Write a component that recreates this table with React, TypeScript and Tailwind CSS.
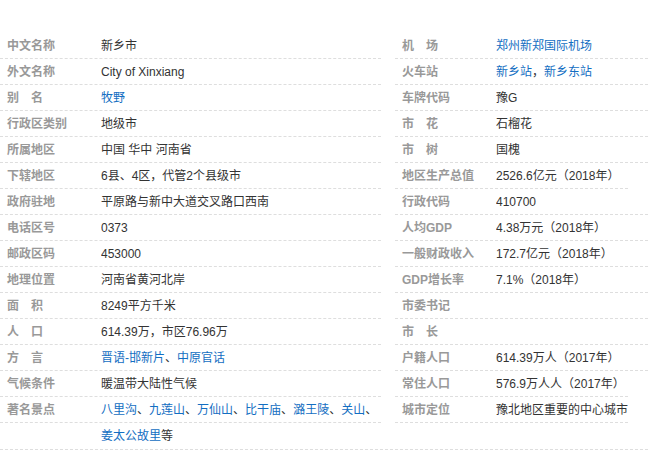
import React from 'react'

type Part = { text: string; link?: boolean }
type Item = { label: string; value: Part[]; short?: boolean; last?: boolean }

const t = (text: string): Part => ({ text })
const a = (text: string): Part => ({ text, link: true })

const leftItems: Item[] = [
  { label: '中文名称', value: [t('新乡市')] },
  { label: '外文名称', value: [t('City of Xinxiang')] },
  { label: '别　名', value: [a('牧野')] },
  { label: '行政区类别', value: [t('地级市')] },
  { label: '所属地区', value: [t('中国 华中 河南省')] },
  { label: '下辖地区', value: [t('6县、4区，代管2个县级市')] },
  { label: '政府驻地', value: [t('平原路与新中大道交叉路口西南')] },
  { label: '电话区号', value: [t('0373')] },
  { label: '邮政区码', value: [t('453000')] },
  { label: '地理位置', value: [t('河南省黄河北岸')] },
  { label: '面　积', value: [t('8249平方千米')] },
  { label: '人　口', value: [t('614.39万，市区76.96万')] },
  { label: '方　言', value: [a('晋语-邯新片'), t('、'), a('中原官话')] },
  { label: '气候条件', value: [t('暖温带大陆性气候')] },
  {
    label: '著名景点',
    value: [
      a('八里沟'), t('、'), a('九莲山'), t('、'), a('万仙山'), t('、'),
      a('比干庙'), t('、'), a('潞王陵'), t('、'), a('关山'), t('、'),
    ],
  },
  { label: '', value: [a('姜太公故里'), t('等')], last: true },
]

const rightItems: Item[] = [
  { label: '机　场', value: [a('郑州新郑国际机场')] },
  { label: '火车站', value: [a('新乡站'), t('，'), a('新乡东站')] },
  { label: '车牌代码', value: [t('豫G')] },
  { label: '市　花', value: [t('石榴花')] },
  { label: '市　树', value: [t('国槐')] },
  { label: '地区生产总值', value: [t('2526.6亿元（2018年）')], short: true },
  { label: '行政代码', value: [t('410700')] },
  { label: '人均GDP', value: [t('4.38万元（2018年）')] },
  { label: '一般财政收入', value: [t('172.7亿元（2018年）')] },
  { label: 'GDP增长率', value: [t('7.1%（2018年）')] },
  { label: '市委书记', value: [] },
  { label: '市　长', value: [] },
  { label: '户籍人口', value: [t('614.39万人（2017年）')] },
  { label: '常住人口', value: [t('576.9万人人（2017年）')], short: true },
  { label: '城市定位', value: [t('豫北地区重要的中心城市')], short: true },
]

function Row({ item }: { item: Item }) {
  return (
    <div
      className={`flex h-[26px] leading-[27px] ${item.last ? '' : 'border-b border-dashed border-[#dedede]'} ${item.short ? 'mr-[20px]' : ''}`}
    >
      <div className="w-[101px] shrink-0 pl-[7px] font-bold text-[#999] whitespace-nowrap overflow-hidden">
        {item.label}
      </div>
      <div className="flex-1 text-[#333] whitespace-nowrap overflow-hidden">
        {item.value.map((p, i) =>
          p.link ? (
            <span key={i} className="text-[#136ec2]">{p.text}</span>
          ) : (
            <span key={i}>{p.text}</span>
          )
        )}
      </div>
    </div>
  )
}

export default function App() {
  return (
    <div
      className="w-[648px] h-[455px] bg-white overflow-hidden pt-[33px] text-[12px]"
      style={{ fontFamily: 'Arial, "Liberation Sans", "Noto Sans CJK SC", sans-serif' }}
    >
      <div className="flex items-start border-b border-dashed border-[#dedede]">
        <div className="w-[381px] shrink-0">
          {leftItems.map((it, i) => <Row key={i} item={it} />)}
        </div>
        <div className="ml-[14px] flex-1">
          {rightItems.map((it, i) => <Row key={i} item={it} />)}
        </div>
      </div>
    </div>
  )
}
